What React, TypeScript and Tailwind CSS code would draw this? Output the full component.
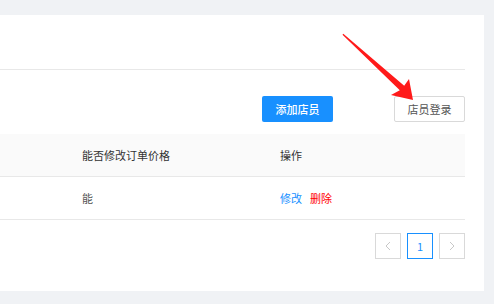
import React from "react";

export default function App() {
  return (
    <div
      className="relative w-[494px] h-[304px] bg-[#f0f2f5] pt-[15px] pr-[10px] pb-[13px] overflow-hidden"
      style={{ fontFamily: '"Noto Sans CJK SC", "Noto Sans", sans-serif' }}
    >
      <div className="h-[276px] bg-white pr-[19px] flex flex-col">
        <div className="h-[55px] border-b border-[#e8e8e8]" />
        <div className="flex justify-end gap-[61px] pt-[26px] h-[64px] items-start">
          <button className="w-[71px] h-[26px] bg-[#1890ff] text-white text-[11px] font-medium rounded-[2px] flex items-center justify-center">
            添加店员
          </button>
          <button className="w-[71px] h-[26px] bg-white border border-[#d9d9d9] text-[#555] text-[11px] rounded-[2px] flex items-center justify-center">
            店员登录
          </button>
        </div>
        <div className="flex items-center h-[43px] bg-[#fafafa] border-b border-[#e8e8e8] text-[11px] text-[#333]">
          <div className="w-[82px]" />
          <div className="w-[198px]">能否修改订单价格</div>
          <div>操作</div>
        </div>
        <div className="flex items-center h-[43px] border-b border-[#e8e8e8] text-[11px] text-[#555]">
          <div className="w-[82px]" />
          <div className="w-[198px]">能</div>
          <div className="flex gap-[8px]">
            <span className="text-[#1890ff]">修改</span>
            <span className="text-[#ff0000]">删除</span>
          </div>
        </div>
        <div className="flex justify-end gap-[6px] pt-[13px]">
          <div className="w-[26px] h-[26px] border border-[#d9d9d9] flex items-center justify-center">
            <svg width="8" height="10" viewBox="0 0 8 10">
              <path d="M6 1 L2 5 L6 9" fill="none" stroke="#c8c8c8" strokeWidth="1" />
            </svg>
          </div>
          <div className="w-[26px] h-[26px] border border-[#1890ff] flex items-center justify-center text-[11px] text-[#1890ff]">
            1
          </div>
          <div className="w-[26px] h-[26px] border border-[#d9d9d9] flex items-center justify-center">
            <svg width="8" height="10" viewBox="0 0 8 10">
              <path d="M2 1 L6 5 L2 9" fill="none" stroke="#c8c8c8" strokeWidth="1" />
            </svg>
          </div>
        </div>
      </div>
      <svg className="absolute left-0 top-0 pointer-events-none" width="494" height="304">
        <polygon
          points="342.5,34.8 343.3,33.8 404.2,85.7 409,79 413,100 391,95 399.8,90.3"
          fill="#ff1a1a"
        />
      </svg>
    </div>
  );
}
